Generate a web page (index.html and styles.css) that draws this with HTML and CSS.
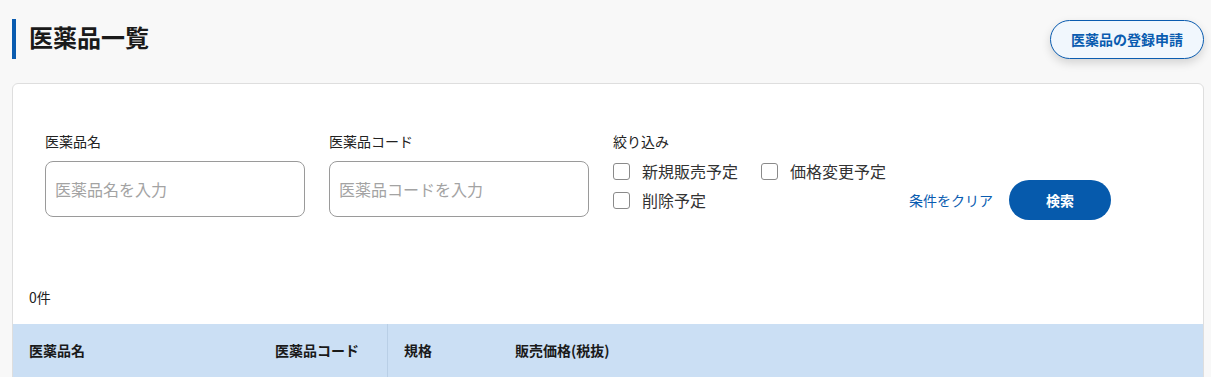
FILE: index.html
```html
<!DOCTYPE html>
<html lang="ja">
<head>
    <meta charset="UTF-8">
    <meta name="viewport" content="width=device-width, initial-scale=1.0">
    <title>医薬品一覧</title>
    <link rel="stylesheet" href="styles.css">
</head>
<body>
    <div class="page">
        <!-- Page header -->
        <div class="page-header">
            <h1 class="page-title">医薬品一覧</h1>
            <button class="register-btn">医薬品の登録申請</button>
        </div>

        <!-- Search card -->
        <div class="card">
            <form class="search-form">
                <div class="field">
                    <label class="field-label" for="name">医薬品名</label>
                    <input class="text-input" type="text" id="name" placeholder="医薬品名を入力">
                </div>
                <div class="field">
                    <label class="field-label" for="code">医薬品コード</label>
                    <input class="text-input" type="text" id="code" placeholder="医薬品コードを入力">
                </div>
                <div class="filter">
                    <span class="field-label">絞り込み</span>
                    <div class="checks">
                        <label class="check"><span class="box"></span>新規販売予定</label>
                        <label class="check"><span class="box"></span>価格変更予定</label>
                        <label class="check"><span class="box"></span>削除予定</label>
                    </div>
                </div>
                <div class="actions">
                    <a class="clear-link" href="#">条件をクリア</a>
                    <button type="submit" class="search-btn">検索</button>
                </div>
            </form>

            <p class="count">0件</p>

            <div class="table-head">
                <div class="th th-name">医薬品名</div>
                <div class="th th-code">医薬品コード</div>
                <div class="th th-spec">規格</div>
                <div class="th th-price">販売価格(税抜)</div>
            </div>
        </div>
    </div>
</body>
</html>
```

FILE: styles.css
```css
/* General reset */
* {
    margin: 0;
    padding: 0;
    box-sizing: border-box;
}

body {
    font-family: 'Noto Sans CJK JP', 'Noto Sans', sans-serif;
    background-color: #f8f8f8;
    color: #222;
}

.page {
    padding: 19px 7px 0 12px;
}

/* Header */
.page-header {
    display: flex;
    justify-content: space-between;
    align-items: center;
    height: 40px;
    margin-bottom: 24px;
}

.page-title {
    border-left: 4px solid #0a5cb0;
    padding-left: 13px;
    height: 40px;
    line-height: 36px;
    font-size: 24px;
    font-weight: bold;
    color: #1a1a1a;
}

.register-btn {
    font-family: inherit;
    width: 154px;
    height: 39px;
    border: 1px solid #0a5cb0;
    border-radius: 20px;
    background-color: #f1f7fd;
    color: #0a5cb0;
    font-size: 14px;
    font-weight: bold;
    box-shadow: 0 4px 10px rgba(0, 0, 0, 0.15);
    cursor: pointer;
}

/* Card */
.card {
    background-color: white;
    border: 1px solid #dedede;
    border-radius: 6px;
    overflow: hidden;
    height: 320px;
}

.search-form {
    display: flex;
    align-items: flex-start;
    gap: 24px;
    padding: 47px 32px 0 32px;
}

.field {
    width: 260px;
}

.field-label {
    display: block;
    font-size: 14px;
    line-height: 20px;
    color: #222;
    margin-bottom: 10px;
}

.text-input {
    width: 100%;
    height: 56px;
    border: 1px solid #9a9a9a;
    border-radius: 8px;
    padding: 0 9px;
    font-family: inherit;
    font-size: 16px;
    color: #222;
}

.text-input::placeholder {
    color: #a3a3a3;
}

/* Filter checkboxes */
.filter {
    flex: none;
    white-space: nowrap;
}

.filter .field-label {
    margin-bottom: 10px;
}

.checks {
    display: grid;
    grid-template-columns: 148px auto;
    row-gap: 9px;
}

.check {
    display: flex;
    align-items: center;
    gap: 12px;
    font-size: 16px;
    line-height: 20px;
    color: #333;
}

.box {
    width: 17px;
    height: 17px;
    border: 1px solid #8a8a8a;
    border-radius: 3px;
    background-color: white;
}

.actions {
    display: flex;
    align-items: center;
    gap: 16px;
    margin-top: 49px;
    margin-left: -1px;
}

.clear-link {
    font-size: 14px;
    color: #0a5cb0;
    text-decoration: none;
}

.search-btn {
    font-family: inherit;
    width: 102px;
    height: 40px;
    border: none;
    border-radius: 20px;
    background-color: #065aac;
    color: white;
    font-size: 14px;
    font-weight: bold;
    cursor: pointer;
}

/* Result count */
.count {
    font-size: 14px;
    line-height: 20px;
    padding: 67px 16px 0 16px;
    color: #222;
}

/* Table header */
.table-head {
    display: flex;
    margin-top: 17px;
    background-color: #cbdff4;
    height: 53px;
}

.th {
    padding: 0 16px;
    font-size: 14px;
    font-weight: bold;
    line-height: 53px;
    color: #1a1a1a;
}

.th-name {
    width: 246px;
}

.th-code {
    width: 129px;
    border-right: 1px solid #b9cfe6;
}

.th-spec {
    width: 111px;
}
```
